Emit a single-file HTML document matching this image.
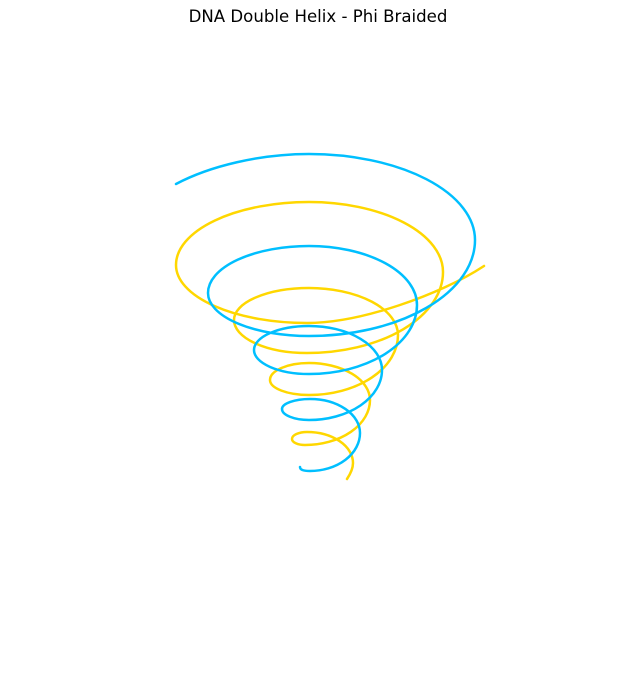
<!DOCTYPE html>
<html><head><meta charset="utf-8"><style>
html,body{margin:0;padding:0;background:#fff;}
body{width:636px;height:677px;position:relative;overflow:hidden;}
.t{position:absolute;top:7px;left:0;width:636px;text-align:center;font-family:"DejaVu Sans","Liberation Sans",sans-serif;font-size:16.6px;color:#000;}
svg{position:absolute;left:0;top:0;}
</style></head><body>
<div class="t">DNA Double Helix - Phi Braided</div>
<svg width="636" height="677" viewBox="0 0 636 677">
<path fill="none" stroke="#FFD700" stroke-width="2.5" stroke-linecap="round" d="M484,266 C440,295 360,323 307,323 A131,58 0 0 1 176,265 A133,63 0 0 1 309,202 A134,70 0 0 1 443,272 A136,81 0 0 1 307,353 A73,33 0 0 1 234,320 A75,32 0 0 1 309,288 A89,47 0 0 1 398,335 A89,60 0 0 1 309,395 A39,15 0 0 1 270,380 A39,17 0 0 1 309,363 A61,37 0 0 1 370,400 A65,45 0 0 1 305,445 A13,6 0 0 1 292,439 A15,7 0 0 1 307,432 A46,31 0 0 1 353,463 Q353,470 347,479"/>
<path fill="none" stroke="#00BFFF" stroke-width="2.5" stroke-linecap="round" d="M176,184 C210,166 260,154 309,154 A166,86 0 0 1 475,240 A166,96 0 0 1 309,336 A101,43 0 0 1 208,293 A101,47 0 0 1 309,246 A108,59 0 0 1 417,305 A108,69 0 0 1 309,374 A55,24 0 0 1 254,350 A55,24 0 0 1 309,326 A73,44 0 0 1 382,370 A73,50 0 0 1 309,420 A27,11 0 0 1 282,409 A28,10 0 0 1 310,399 A50,34 0 0 1 360,433 A50,38 0 0 1 310,471 Q300,471 300,467"/>
</svg>
</body></html>
